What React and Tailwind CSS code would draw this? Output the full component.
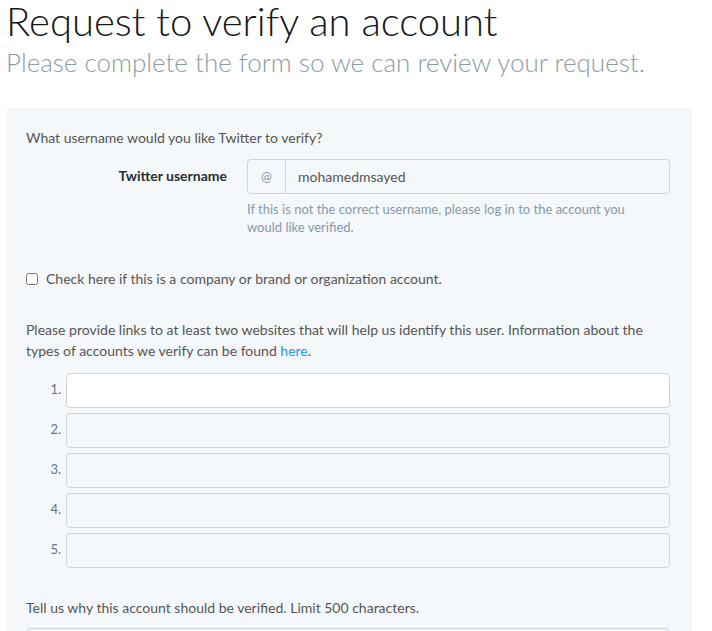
import { useState } from "react";

const font = { fontFamily: "Lato, 'Open Sans', sans-serif" };

const LinkRow = ({ n, first }) => (
  <div className="flex items-center h-[40px]">
    <span className="w-[40px] pr-[5px] text-right text-[13px] text-[#66757f]">{n}.</span>
    <input
      type="text"
      className={`h-[35px] w-[604px] rounded-[4px] border border-[#ccd6dd] outline-none px-3 text-[14px] ${
        first ? "bg-white" : "bg-[#f5f8fa]"
      }`}
    />
  </div>
);

export default function App() {
  const [isCompany, setIsCompany] = useState(false);

  return (
    <div className="w-[712px] h-[631px] overflow-hidden bg-white" style={font}>
      <div className="pl-[6px]">
        <h1 className="text-[40px] font-light text-[#14171a] leading-[42px]">
          Request to verify an account
        </h1>
        <p className="text-[26px] font-light text-[#8f9aa3] leading-[30px] mt-[5px]">
          Please complete the form so we can review your request.
        </p>
      </div>

      {/* Form panel */}
      <div className="ml-[6px] mt-[31px] w-[685px] bg-[#f5f8fa] rounded-t-[4px] border-r border-[#eef1f3] pl-[20px] pt-[20px] pb-6">
        <p className="text-[14px] text-[#555] leading-[20px]">
          What username would you like Twitter to verify?
        </p>

        <div className="flex items-start mt-[11px]">
          <label className="w-[221px] text-right text-[14px] font-bold text-[#292f33] leading-[34px] pr-[20px]">
            Twitter username
          </label>
          <div>
            <div className="flex h-[35px] w-[423px] rounded-[4px] border border-[#ccd6dd] bg-[#f5f8fa]">
              <span className="w-[38px] border-r border-[#ccd6dd] flex items-center justify-center text-[13px] text-[#8899a6]">
                @
              </span>
              <span className="flex items-center pl-[12px] text-[14px] text-[#555]">mohamedmsayed</span>
            </div>
            <p className="mt-[6px] text-[13px] leading-[18px] text-[#8899a6] w-[400px]">
              If this is not the correct username, please log in to the account you would like verified.
            </p>
          </div>
        </div>

        <label className="flex items-center mt-[32px] text-[14px] text-[#555]">
          <input
            type="checkbox"
            checked={isCompany}
            onChange={() => setIsCompany(!isCompany)}
            className="w-[12px] h-[12px] mr-[8px] accent-[#1da1f2]"
          />
          Check here if this is a company or brand or organization account.
        </label>

        <p className="mt-[30px] text-[14px] leading-[21px] text-[#555] w-[640px]">
          Please provide links to at least two websites that will help us identify this user. Information about the
          types of accounts we verify can be found <a className="text-[#1b95e0]">here</a>.
        </p>

        <div className="mt-[9px]">
          {[1, 2, 3, 4, 5].map((n) => (
            <LinkRow key={n} n={n} first={n === 1} />
          ))}
        </div>

        <p className="mt-[28px] text-[14px] leading-[20px] text-[#555]">
          Tell us why this account should be verified. Limit 500 characters.
        </p>
        <textarea className="mt-[10px] w-[644px] h-[100px] rounded-[4px] border border-[#ccd6dd] bg-[#f5f8fa] outline-none" />
      </div>
    </div>
  );
}
